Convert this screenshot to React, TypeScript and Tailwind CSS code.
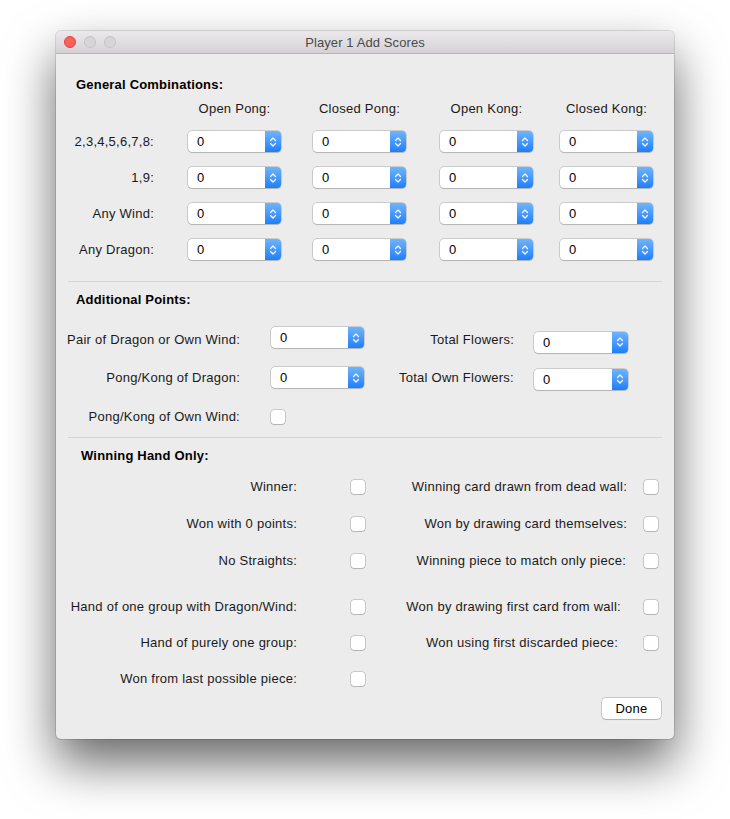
import React from "react";

function Chevrons() {
  return (
    <svg width="8" height="12" viewBox="0 0 8 12" fill="none">
      <path d="M1.5 4.5 L4 2 L6.5 4.5" stroke="white" strokeWidth="1.2" strokeLinecap="round" strokeLinejoin="round" />
      <path d="M1.5 7.5 L4 10 L6.5 7.5" stroke="white" strokeWidth="1.2" strokeLinecap="round" strokeLinejoin="round" />
    </svg>
  );
}

function Combo({ className = "" }: { className?: string }) {
  return (
    <div
      className={
        "flex h-[21px] w-[93px] shrink-0 rounded-[4px] bg-white shadow-[0_0_0_0.5px_rgba(0,0,0,0.28),0_1px_1px_rgba(0,0,0,0.12)] " +
        className
      }
    >
      <div className="flex-1 pl-[9px] text-[13px] leading-[21px] text-black">0</div>
      <div className="flex w-[16px] items-center justify-center rounded-r-[4px] bg-linear-to-b from-[#6db4fb] to-[#1b7ffa]">
        <Chevrons />
      </div>
    </div>
  );
}

function Check({ className = "" }: { className?: string }) {
  return (
    <div
      className={
        "h-[14px] w-[14px] shrink-0 rounded-[3px] bg-white shadow-[0_0_0_0.5px_rgba(0,0,0,0.3),0_1px_1px_rgba(0,0,0,0.1)] " +
        className
      }
    />
  );
}

function Sep() {
  return <div className="mx-[12px] h-px bg-[#d6d6d6]" />;
}

function GenRow({ label, className = "" }: { label: string; className?: string }) {
  return (
    <div className={"flex items-center " + className}>
      <div className="w-[98px] text-right">{label}</div>
      <Combo className="ml-[34px]" />
      <Combo className="ml-[32px]" />
      <Combo className="ml-[34px]" />
      <Combo className="ml-[27px]" />
    </div>
  );
}

function WinRow({
  left,
  right,
  rightPad = "pr-0",
  className = "",
}: {
  left: string;
  right?: string;
  rightPad?: string;
  className?: string;
}) {
  return (
    <div className={"flex h-[20px] items-center " + className}>
      <div className="w-[241px] whitespace-nowrap text-right">{left}</div>
      <Check className="ml-[54px]" />
      {right ? (
        <>
          <div className={"w-[262px] whitespace-nowrap text-right " + rightPad}>{right}</div>
          <Check className="ml-[17px]" />
        </>
      ) : null}
    </div>
  );
}

export default function App() {
  return (
    <div className="min-h-screen bg-white pl-[56px] pt-[31px] font-['Liberation_Sans',Arial,sans-serif] text-[13px] leading-[16px] tracking-[0.25px] text-[#1a1a1a]">
      <div className="h-[708px] w-[618px] overflow-hidden rounded-[5px] bg-[#ececec] shadow-[0_0_0_1px_rgba(0,0,0,0.12),0_24px_50px_rgba(0,0,0,0.6)]">
        {/* Title bar */}
        <div className="grid h-[23px] grid-cols-[1fr_auto_1fr] items-center border-b border-[#b4b4b4] bg-linear-to-b from-[#ebe9eb] to-[#d4d2d4]">
          <div className="flex items-center gap-[8px] pl-[8px]">
            <div className="h-[12px] w-[12px] rounded-full border-[0.5px] border-[#e0443e] bg-[#fc605c]" />
            <div className="h-[12px] w-[12px] rounded-full border-[0.5px] border-[#c4c4c4] bg-[#d6d6d6]" />
            <div className="h-[12px] w-[12px] rounded-full border-[0.5px] border-[#c4c4c4] bg-[#d6d6d6]" />
          </div>
          <div className="pt-[2px] text-[13px] tracking-[0.1px] text-[#4a4a4a]">Player 1 Add Scores</div>
          <div />
        </div>

        {/* General Combinations */}
        <div className="pt-[23px]">
          <div className="pl-[20px] font-bold tracking-[0.2px] text-black">General Combinations:</div>
          <div className="mt-[8px] flex">
            <div className="w-[132px]" />
            <div className="w-[93px] whitespace-nowrap text-center">Open Pong:</div>
            <div className="ml-[32px] w-[93px] whitespace-nowrap text-center">Closed Pong:</div>
            <div className="ml-[34px] w-[93px] whitespace-nowrap text-center">Open Kong:</div>
            <div className="ml-[27px] w-[93px] whitespace-nowrap text-center">Closed Kong:</div>
          </div>
          <div className="mt-[14px] flex flex-col gap-[15px]">
            <GenRow label="2,3,4,5,6,7,8:" />
            <GenRow label="1,9:" />
            <GenRow label="Any Wind:" />
            <GenRow label="Any Dragon:" />
          </div>
        </div>

        <div className="mt-[21px]">
          <Sep />
        </div>

        {/* Additional Points */}
        <div className="pt-[10px]">
          <div className="pl-[20px] font-bold tracking-[0.2px] text-black">Additional Points:</div>
          <div className="mt-[20px] flex h-[24px] items-center">
            <div className="w-[184px] whitespace-nowrap text-right">Pair of Dragon or Own Wind:</div>
            <Combo className="mb-[5px] ml-[31px]" />
            <div className="w-[150px] whitespace-nowrap text-right">Total Flowers:</div>
            <Combo className="ml-[20px] mt-[4px] w-[94px]" />
          </div>
          <div className="mt-[14px] flex h-[24px] items-center">
            <div className="w-[184px] whitespace-nowrap text-right">Pong/Kong of Dragon:</div>
            <Combo className="mb-[1px] ml-[31px]" />
            <div className="w-[150px] whitespace-nowrap text-right">Total Own Flowers:</div>
            <Combo className="ml-[20px] mt-[2px] w-[94px]" />
          </div>
          <div className="mt-[17px] flex h-[20px] items-center">
            <div className="w-[184px] whitespace-nowrap text-right">Pong/Kong of Own Wind:</div>
            <Check className="ml-[31px]" />
          </div>
        </div>

        <div className="mt-[10px]">
          <Sep />
        </div>

        {/* Winning Hand Only */}
        <div className="pt-[10px]">
          <div className="pl-[25px] font-bold tracking-[0.2px] text-black">Winning Hand Only:</div>
          <WinRow className="mt-[13px]" left="Winner:" right="Winning card drawn from dead wall:" />
          <WinRow className="mt-[17px]" left="Won with 0 points:" right="Won by drawing card themselves:" />
          <WinRow className="mt-[17px]" left="No Straights:" right="Winning piece to match only piece:" rightPad="pr-[1px]" />
          <WinRow className="mt-[26px]" left="Hand of one group with Dragon/Wind:" right="Won by drawing first card from wall:" rightPad="pr-[6px]" />
          <WinRow className="mt-[16px]" left="Hand of purely one group:" right="Won using first discarded piece:" rightPad="pr-[9px]" />
          <WinRow className="mt-[16px]" left="Won from last possible piece:" />
          <div className="mt-[9px] flex justify-end pr-[13px]">
            <div className="flex h-[21px] w-[59px] items-center justify-center rounded-[4px] bg-white text-black shadow-[0_0_0_0.5px_rgba(0,0,0,0.3),0_1px_1px_rgba(0,0,0,0.12)]">
              Done
            </div>
          </div>
        </div>
      </div>
    </div>
  );
}
